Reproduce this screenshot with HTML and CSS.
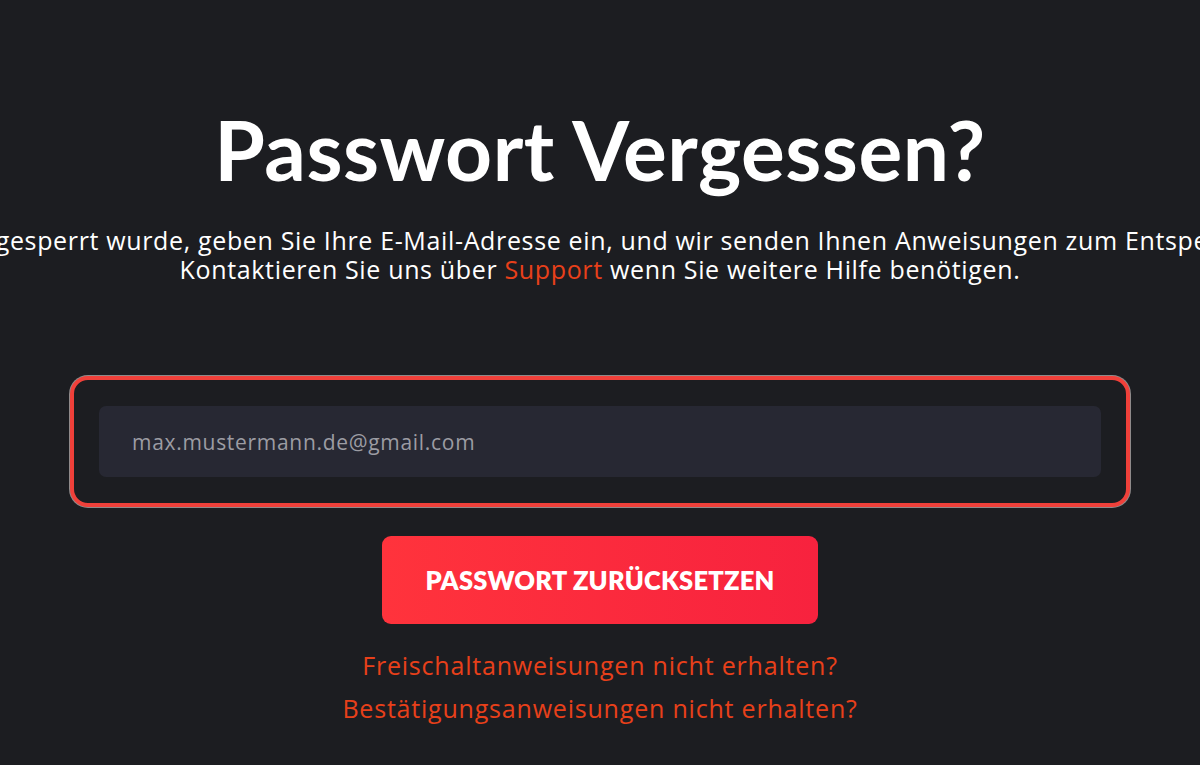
FILE: index.html
```html
<!DOCTYPE html>
<html lang="de">
<head>
<meta charset="utf-8">
<title>Passwort Vergessen?</title>
<link rel="stylesheet" href="styles.css">
</head>
<body>
<main class="page">
  <h1 class="title">Passwort Vergessen?</h1>
  <div class="intro">
    <p class="line">Wenn Ihr Konto gesperrt wurde, geben Sie Ihre E-Mail-Adresse ein, und wir senden Ihnen Anweisungen zum Entsperren des Kontos</p>
    <p class="line">Kontaktieren Sie uns über <a class="accent" href="#">Support</a> wenn Sie weitere Hilfe benötigen.</p>
  </div>
  <form class="form">
    <div class="field-frame">
      <input class="field" type="email" placeholder="max.mustermann.de@gmail.com">
    </div>
    <button class="submit" type="button">PASSWORT ZURÜCKSETZEN</button>
    <div class="links">
      <a class="accent link" href="#">Freischaltanweisungen nicht erhalten?</a>
      <a class="accent link" href="#">Bestätigungsanweisungen nicht erhalten?</a>
    </div>
  </form>
</main>
</body>
</html>
```

FILE: styles.css
```css
html, body {
  margin: 0;
  padding: 0;
  background: #1c1d21;
  overflow: hidden;
}
body {
  width: 1200px;
  height: 765px;
  font-family: "Open Sans", Lato, sans-serif;
  color: #ffffff;
}
.page {
  display: flex;
  flex-direction: column;
  align-items: center;
  padding-top: 103px;
}
.title {
  margin: 0;
  font-family: Lato, "Open Sans", sans-serif;
  font-size: 82px;
  line-height: 92px;
  font-weight: 700;
  letter-spacing: 0.5px;
}
.intro {
  margin-top: 31px;
  width: 1200px;
  display: flex;
  flex-direction: column;
  align-items: center;
}
.line {
  margin: 0;
  white-space: nowrap;
  font-size: 25px;
  line-height: 29px;
  letter-spacing: 0.65px;
}
.accent {
  color: #e8401a;
  text-decoration: none;
}
.form {
  margin-top: 92px;
  display: flex;
  flex-direction: column;
  align-items: center;
}
.field-frame {
  box-sizing: border-box;
  width: 1060px;
  height: 131px;
  padding: 26px 25px;
  border: 4px solid #f0403a;
  border-radius: 18px;
  box-shadow: 0 0 0 1px #8f8a8a;
  background: #1c1d21;
}
.field {
  box-sizing: border-box;
  width: 100%;
  height: 71px;
  border: none;
  outline: none;
  border-radius: 7px;
  background: #272833;
  padding: 0 33px;
  font-family: "Open Sans", Lato, sans-serif;
  font-size: 21px;
  letter-spacing: 0.7px;
  color: #ffffff;
}
.field::placeholder {
  color: #9c9ca3;
}
.submit {
  margin-top: 29px;
  width: 436px;
  height: 88px;
  border: none;
  border-radius: 9px;
  background: linear-gradient(90deg, #ff333c 0%, #f7223e 100%);
  color: #ffffff;
  font-family: Lato, "Open Sans", sans-serif;
  font-size: 25.5px;
  font-weight: 800;
  letter-spacing: 0.2px;
}
.links {
  margin-top: 27px;
  display: flex;
  flex-direction: column;
  align-items: center;
  gap: 14px;
}
.link {
  font-size: 25px;
  line-height: 29px;
  letter-spacing: 0.8px;
}
```
